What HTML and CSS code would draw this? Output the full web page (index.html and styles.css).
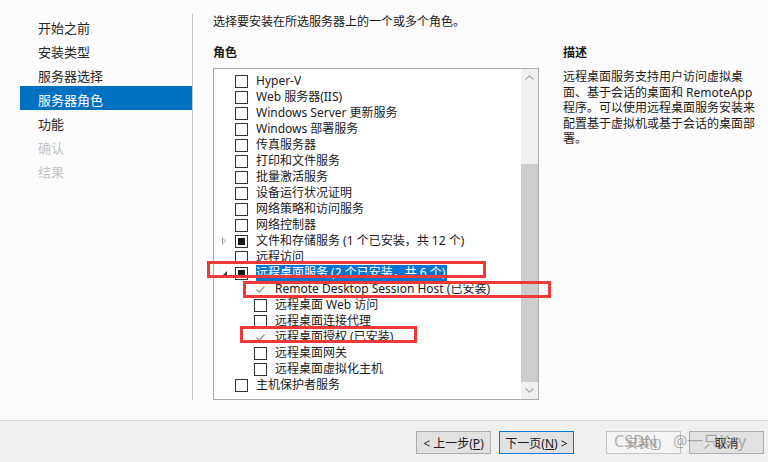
FILE: index.html
```html
<!DOCTYPE html>
<html lang="zh-CN">
<head>
    <meta charset="UTF-8">
    <meta name="viewport" content="width=device-width, initial-scale=1.0">
    <title>添加角色和功能向导</title>
    <link rel="stylesheet" href="styles.css">
</head>
<body>
    <div class="wizard">
        <div class="main">
            <ul class="steps">
                <li>开始之前</li>
                <li>安装类型</li>
                <li>服务器选择</li>
                <li class="current">服务器角色</li>
                <li>功能</li>
                <li class="disabled">确认</li>
                <li class="disabled">结果</li>
            </ul>

            <div class="page">
                <p class="intro">选择要安装在所选服务器上的一个或多个角色。</p>
                <div class="cols">
                    <div class="roles">
                        <h2>角色</h2>
                        <div class="listbox">
                            <ul class="tree">
                                <li class="row"><span class="exp"></span><span class="cb"></span><span class="label">Hyper-V</span></li>
                                <li class="row"><span class="exp"></span><span class="cb"></span><span class="label">Web 服务器(IIS)</span></li>
                                <li class="row"><span class="exp"></span><span class="cb"></span><span class="label">Windows Server 更新服务</span></li>
                                <li class="row"><span class="exp"></span><span class="cb"></span><span class="label">Windows 部署服务</span></li>
                                <li class="row"><span class="exp"></span><span class="cb"></span><span class="label">传真服务器</span></li>
                                <li class="row"><span class="exp"></span><span class="cb"></span><span class="label">打印和文件服务</span></li>
                                <li class="row"><span class="exp"></span><span class="cb"></span><span class="label">批量激活服务</span></li>
                                <li class="row"><span class="exp"></span><span class="cb"></span><span class="label">设备运行状况证明</span></li>
                                <li class="row"><span class="exp"></span><span class="cb"></span><span class="label">网络策略和访问服务</span></li>
                                <li class="row"><span class="exp"></span><span class="cb"></span><span class="label">网络控制器</span></li>
                                <li class="row"><span class="exp collapsed"></span><span class="cb partial"></span><span class="label">文件和存储服务 (1 个已安装，共 12 个)</span></li>
                                <li class="row"><span class="exp"></span><span class="cb"></span><span class="label">远程访问</span></li>
                                <li class="row"><span class="exp expanded"></span><span class="cb partial"></span><span class="label selected">远程桌面服务 (2 个已安装，共 6 个)</span></li>
                                <li class="row sub"><span class="exp"></span><span class="cb installed"><svg width="11" height="11" viewBox="0 0 11 11"><path d="M1.5 5.5 L4.3 8.2 L9.5 2.5" fill="none" stroke="#9a9a9a" stroke-width="1.4"/></svg></span><span class="label">Remote Desktop Session Host (已安装)</span></li>
                                <li class="row sub"><span class="exp"></span><span class="cb"></span><span class="label">远程桌面 Web 访问</span></li>
                                <li class="row sub"><span class="exp"></span><span class="cb"></span><span class="label">远程桌面连接代理</span></li>
                                <li class="row sub"><span class="exp"></span><span class="cb installed"><svg width="11" height="11" viewBox="0 0 11 11"><path d="M1.5 5.5 L4.3 8.2 L9.5 2.5" fill="none" stroke="#9a9a9a" stroke-width="1.4"/></svg></span><span class="label">远程桌面授权 (已安装)</span></li>
                                <li class="row sub"><span class="exp"></span><span class="cb"></span><span class="label">远程桌面网关</span></li>
                                <li class="row sub"><span class="exp"></span><span class="cb"></span><span class="label">远程桌面虚拟化主机</span></li>
                                <li class="row"><span class="exp"></span><span class="cb"></span><span class="label">主机保护者服务</span></li>
                            </ul>
                            <div class="scrollbar">
                                <span class="arrow"><svg width="9" height="5" viewBox="0 0 9 5"><path d="M0.5 4.5 L4.5 0.8 L8.5 4.5" fill="none" stroke="#a6a6a6" stroke-width="1.1"/></svg></span>
                                <span class="track"><span class="thumb"></span></span>
                                <span class="arrow"><svg width="9" height="5" viewBox="0 0 9 5"><path d="M0.5 0.5 L4.5 4.2 L8.5 0.5" fill="none" stroke="#a6a6a6" stroke-width="1.1"/></svg></span>
                            </div>
                        </div>
                    </div>

                    <div class="desc">
                        <h2>描述</h2>
                        <p>远程桌面服务支持用户访问虚拟桌<br>面、基于会话的桌面和 RemoteApp<br>程序。可以使用远程桌面服务安装来<br>配置基于虚拟机或基于会话的桌面部<br>署。</p>
                    </div>
                </div>
            </div>
        </div>

        <div class="buttons">
            <button class="btn">&lt; 上一步(<u>P</u>)</button>
            <button class="btn focused">下一页(<u>N</u>) &gt;</button>
            <button class="btn disabled install">安装(<u>I</u>)</button>
            <button class="btn">取消</button>
        </div>
    </div>

    <!-- red annotation boxes drawn over the screenshot -->
    <div class="mark mark-service"></div>
    <div class="mark mark-host"></div>
    <div class="mark mark-licensing"></div>

    <div class="watermark">CSDN @一只Key</div>
</body>
</html>
```

FILE: styles.css
```css
body {
    margin: 0;
    width: 768px;
    height: 462px;
    overflow: hidden;
    position: relative;
    font-family: "Noto Sans", "Noto Sans CJK SC", sans-serif;
    font-size: 12px;
    color: #1a1a1a;
    background-color: #fcfcfc;
}

.wizard {
    display: flex;
    flex-direction: column;
    height: 462px;
}

.main {
    display: flex;
    height: 420px;
}

/* left step list */
.steps {
    list-style: none;
    margin: 14px 0 0;
    padding: 0;
    width: 192px;
    height: 386px;
    border-right: 1px solid #c8c8c8;
}

.steps li {
    margin-left: 20px;
    height: 22px;
    padding-top: 2px;
    line-height: 24px;
    padding-left: 18px;
    font-size: 13px;
    color: #262626;
}

.steps li.current {
    background-color: #0070c0;
    color: #fff;
}

.steps li.disabled {
    color: #c4c4c4;
}

/* right page */
.page {
    padding: 14px 0 0 20px;
}

.intro {
    margin: 0;
    line-height: 16px;
}

.cols {
    display: flex;
    gap: 24px;
    margin-top: 15px;
}

.roles h2,
.desc h2 {
    margin: 0;
    font-size: 12px;
    font-weight: bold;
    line-height: 16px;
}

.roles {
    width: 326px;
}

.listbox {
    margin-top: 7px;
    height: 332px;
    box-sizing: border-box;
    border: 1px solid #acacac;
    background: #fff;
    display: flex;
}

.tree {
    list-style: none;
    margin: 0;
    padding: 4px 0 0;
    flex: 1;
}

.row {
    display: flex;
    align-items: center;
    height: 16px;
    white-space: nowrap;
}

.row.sub {
    padding-left: 19px;
}

.exp {
    width: 21px;
    height: 16px;
    flex: none;
    position: relative;
}

.exp.collapsed::after {
    content: "";
    position: absolute;
    left: 8px;
    top: 4px;
    width: 0;
    height: 0;
    border-top: 4px solid transparent;
    border-bottom: 4px solid transparent;
    border-left: 4px solid #a6a6a6;
}

.exp.collapsed::before {
    content: "";
    position: absolute;
    left: 9px;
    top: 6px;
    width: 0;
    height: 0;
    border-top: 2px solid transparent;
    border-bottom: 2px solid transparent;
    border-left: 2px solid #fff;
    z-index: 1;
}

.exp.expanded::after {
    content: "";
    position: absolute;
    left: 7px;
    top: 6px;
    width: 0;
    height: 0;
    border-left: 6px solid transparent;
    border-bottom: 6px solid #3a3a3a;
}

.cb {
    width: 13px;
    height: 13px;
    flex: none;
    box-sizing: border-box;
    border: 1px solid #333;
    background: #fff;
    margin-right: 8px;
    display: flex;
    align-items: center;
    justify-content: center;
}

.cb.partial::after {
    content: "";
    width: 7px;
    height: 7px;
    background: #1a1a1a;
}

.cb.installed {
    border-color: #f2f2f2;
}

.label {
    line-height: 16px;
}

.label.selected {
    background-color: #0a74d0;
    color: #fff;
    padding-right: 2px;
}

.scrollbar {
    width: 17px;
    display: flex;
    flex-direction: column;
    background: #f0f0f0;
}

.arrow {
    height: 17px;
    display: flex;
    align-items: center;
    justify-content: center;
}

.track {
    flex: 1;
    display: flex;
    flex-direction: column;
    justify-content: flex-end;
}

.thumb {
    height: 218px;
    background: #cdcdcd;
}

.desc {
    width: 196px;
}

.desc p {
    margin: 8px 0 0;
    line-height: 15.5px;
    white-space: nowrap;
}

/* bottom button bar */
.buttons {
    flex: 1;
    display: flex;
    justify-content: flex-end;
    gap: 8px;
    padding: 10px 4px 0 0;
    background: #f0f0f0;
    border-top: 1px solid #dcdcdc;
}

.btn {
    width: 75px;
    height: 23px;
    box-sizing: border-box;
    border: 1px solid #adadad;
    background: #e1e1e1;
    font-family: "Noto Sans", "Noto Sans CJK SC", sans-serif;
    font-size: 12px;
    color: #1a1a1a;
    padding: 0;
}

.btn.focused {
    border-color: #0078d7;
}

.btn.disabled {
    background: #f4f4f4;
    border-color: #c4c4c4;
    color: #a3a3a3;
}

.btn.install {
    margin-left: 24px;
}

.mark {
    position: absolute;
    box-sizing: border-box;
    border: 3px solid #ef3838;
}

.mark-service {
    left: 207px;
    top: 261px;
    width: 279px;
    height: 17px;
}

.mark-host {
    left: 243px;
    top: 281px;
    width: 308px;
    height: 17px;
}

.mark-licensing {
    left: 240px;
    top: 326px;
    width: 177px;
    height: 17px;
}

.watermark {
    position: absolute;
    left: 614px;
    top: 431px;
    font-size: 16px;
    line-height: 20px;
    word-spacing: 12px;
    color: rgba(130, 130, 130, 0.6);
    pointer-events: none;
}
```
